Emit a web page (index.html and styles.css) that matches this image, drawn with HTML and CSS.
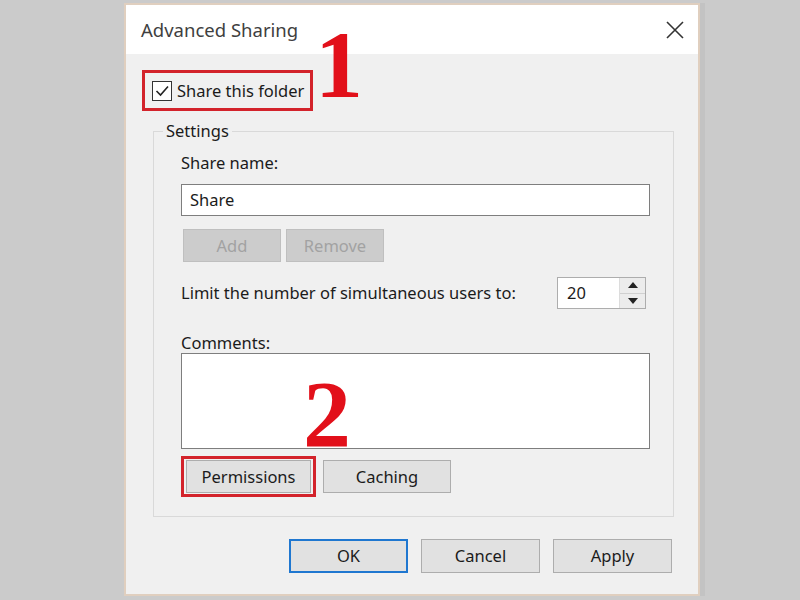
FILE: index.html
```html
<!DOCTYPE html>
<html>
<head>
<meta charset="utf-8">
<link rel="stylesheet" href="styles.css">
</head>
<body>
<div class="dialog">
  <div class="titlebar">
    <span class="title">Advanced Sharing</span>
    <svg class="close" width="18" height="18" viewBox="0 0 18 18"><path d="M1 1 L17 17 M17 1 L1 17" stroke="#333" stroke-width="1.6" fill="none"/></svg>
  </div>
  <div class="content">
    <div class="highlight share">
      <span class="checkbox"><svg width="18" height="18" viewBox="0 0 18 18"><path d="M3.5 9 L7.5 13 L15 4.5" stroke="#222" stroke-width="1.6" fill="none"/></svg></span>
      <span class="share-label">Share this folder</span>
    </div>
    <fieldset class="settings">
      <legend>Settings</legend>
      <div class="inner">
        <div class="label">Share name:</div>
        <div class="field">Share</div>
        <div class="btnrow">
          <button class="btn disabled">Add</button>
          <button class="btn disabled">Remove</button>
        </div>
        <div class="limit">
          <span>Limit the number of simultaneous users to:</span>
          <div class="spin">
            <span class="spin-value">20</span>
            <span class="spin-arrows">
              <span class="arrow up"></span>
              <span class="arrow down"></span>
            </span>
          </div>
        </div>
        <div class="label comments">Comments:</div>
        <div class="textarea"></div>
        <div class="btnrow2">
          <span class="highlight perm"><button class="btn permissions">Permissions</button></span>
          <button class="btn caching">Caching</button>
        </div>
      </div>
    </fieldset>
    <div class="footer">
      <button class="btn foot ok">OK</button>
      <button class="btn foot">Cancel</button>
      <button class="btn foot">Apply</button>
    </div>
  </div>
  <span class="annot one">1</span>
  <span class="annot two">2</span>
</div>
</body>
</html>
```
FILE: styles.css
```css
html, body {
  margin: 0;
  padding: 0;
}
body {
  background: #cbcbcb;
  width: 800px;
  height: 600px;
  overflow: hidden;
  font-family: "Noto Sans", "Open Sans", sans-serif;
  font-size: 16.5px;
  color: #1b1b1b;
}
.dialog {
  position: relative;
  box-sizing: border-box;
  width: 576px;
  height: 593px;
  margin: 3px 0 0 124px;
  border: 2px solid #e0cfbf;
  background: #f0f0f0;
  box-shadow: 5px 0 0 #c3c3c3;
}
.titlebar {
  height: 49px;
  background: #ffffff;
  display: flex;
  align-items: center;
  justify-content: space-between;
  padding: 0 14px 0 15px;
}
.title {
  color: #3f3f3f;
  font-size: 18.5px;
}
.close {
  display: block;
}
.content {
  padding: 16px 24px 0 16px;
}
.highlight {
  border: 3px solid #d3232b;
  box-sizing: border-box;
}
.share {
  display: flex;
  align-items: center;
  width: 171px;
  height: 41px;
  padding-left: 7px;
  gap: 5px;
}
.checkbox {
  width: 20px;
  height: 20px;
  box-sizing: border-box;
  border: 1px solid #333;
  background: #fff;
  display: flex;
  align-items: center;
  justify-content: center;
}
.checkbox svg {
  display: block;
}
.share-label {
  white-space: nowrap;
  line-height: 20px;
}
.settings {
  box-sizing: border-box;
  margin: 10px 0 0 11px;
  padding: 0;
  width: 521px;
  border: 1px solid #d9d9d9;
  min-width: 0;
}
.settings legend {
  margin-left: 9px;
  padding: 0 3px;
  line-height: 20px;
}
.inner {
  padding: 12px 23px 19px 27px;
}
.label {
  line-height: 20px;
}
.field {
  margin-top: 11px;
  height: 32px;
  box-sizing: border-box;
  border: 1px solid #7e7e7e;
  background: #fff;
  padding-left: 8px;
  line-height: 30px;
}
.btn {
  font-family: "Noto Sans", "Open Sans", sans-serif;
  font-size: 16.5px;
  color: #1b1b1b;
  background: #e1e1e1;
  border: 1px solid #adadad;
  box-sizing: border-box;
  padding: 0;
  margin: 0;
  line-height: 20px;
}
.btnrow {
  display: flex;
  gap: 5px;
  margin: 13px 0 0 2px;
}
.btn.disabled {
  width: 98px;
  height: 33px;
  background: #cccccc;
  border-color: #bfbfbf;
  color: #a2a2a2;
}
.limit {
  margin-top: 15px;
  display: flex;
  align-items: center;
  justify-content: space-between;
  padding-right: 4px;
}
.limit > span {
  line-height: 20px;
  white-space: nowrap;
}
.spin {
  width: 89px;
  height: 32px;
  box-sizing: border-box;
  border: 1px solid #adadad;
  background: #fff;
  display: flex;
}
.spin-value {
  flex: 1;
  padding-left: 9px;
  line-height: 30px;
}
.spin-arrows {
  width: 25px;
  display: flex;
  flex-direction: column;
  border-left: 1px solid #dcdcdc;
  background: #ececec;
}
.arrow {
  flex: 1;
  display: flex;
  align-items: center;
  justify-content: center;
}
.arrow.up {
  border-bottom: 1px solid #d0d0d0;
}
.arrow::before {
  content: "";
  width: 0;
  height: 0;
  border-left: 5px solid transparent;
  border-right: 5px solid transparent;
}
.arrow.up::before {
  border-bottom: 6px solid #222;
}
.arrow.down::before {
  border-top: 6px solid #222;
}
.comments {
  margin-top: 24px;
}
.textarea {
  height: 96px;
  box-sizing: border-box;
  border: 1px solid #7e7e7e;
  background: #fff;
}
.btnrow2 {
  margin-top: 7px;
  display: flex;
  align-items: center;
  gap: 7px;
}
.perm {
  display: flex;
  padding: 1px 2px;
  width: 135px;
  height: 41px;
}
.permissions {
  width: 125px;
  height: 33px;
}
.caching {
  width: 128px;
  height: 33px;
}
.footer {
  display: flex;
  justify-content: flex-end;
  gap: 13px;
  margin-top: 22px;
  padding-right: 2px;
}
.foot {
  width: 119px;
  height: 34px;
}
.ok {
  border: 2px solid #1f77d0;
}
.annot {
  position: absolute;
  font-family: "Liberation Serif", "Times New Roman", serif;
  font-weight: bold;
  font-size: 96px;
  line-height: 1;
  color: #e2101a;
}
.one {
  left: 189px;
  top: 12px;
}
.two {
  left: 177px;
  top: 362px;
}
```
